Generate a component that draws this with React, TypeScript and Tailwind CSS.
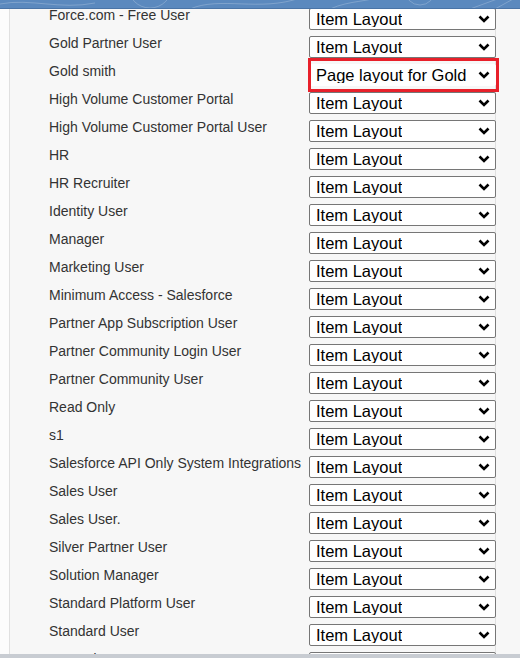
import React from "react";

const profiles = [
  "Force.com - Free User",
  "Gold Partner User",
  "Gold smith",
  "High Volume Customer Portal",
  "High Volume Customer Portal User",
  "HR",
  "HR Recruiter",
  "Identity User",
  "Manager",
  "Marketing User",
  "Minimum Access - Salesforce",
  "Partner App Subscription User",
  "Partner Community Login User",
  "Partner Community User",
  "Read Only",
  "s1",
  "Salesforce API Only System Integrations",
  "Sales User",
  "Sales User.",
  "Silver Partner User",
  "Solution Manager",
  "Standard Platform User",
  "Standard User",
  "Second User",
];

function Chevron() {
  return (
    <svg width="12" height="8" viewBox="0 0 12 8" className="shrink-0">
      <path d="M1.5 1.5 L6 6 L10.5 1.5" fill="none" stroke="#000" strokeWidth="2.6" />
    </svg>
  );
}

function LayoutSelect({ value, highlight }: { value: string; highlight?: boolean }) {
  return (
    <div className="relative -mr-px mt-[3px] w-[187px]">
      <div
        className={
          "flex h-[22px] items-center justify-between rounded-[2px] border bg-white pl-[6px] pr-[5px] text-[16.5px] leading-none text-black " +
          (highlight ? "border-white" : "border-[#767676]")
        }
      >
        <span className="overflow-hidden whitespace-nowrap">{value}</span>
        <Chevron />
      </div>
      {highlight && (
        <div className="pointer-events-none absolute -bottom-[3px] -left-[1px] -right-[3px] -top-[6px] border-[3px] border-[#e8202a]" />
      )}
    </div>
  );
}

function Header() {
  return (
    <div className="relative h-[9px] shrink-0 overflow-hidden border-b border-[#4a74a6] bg-[#5b89be]">
      <svg width="520" height="9" className="absolute inset-0" viewBox="0 0 520 9">
        <g fill="none" stroke="rgba(255,255,255,0.22)" strokeWidth="1">
          <path d="M0 4 C30 -2 60 10 95 3" />
          <circle cx="150" cy="-14" r="22" />
          <path d="M190 9 C220 -4 260 12 300 -2" />
          <path d="M330 9 C350 0 370 2 380 -4" />
          <circle cx="420" cy="-10" r="15" />
          <path d="M470 9 L500 -2" />
          <path d="M495 9 L515 -2" />
        </g>
      </svg>
    </div>
  );
}

export default function App() {
  return (
    <div
      className="flex h-[658px] w-[520px] flex-col overflow-hidden bg-[#f7f7f7]"
      style={{ fontFamily: '"Liberation Sans", Arial, sans-serif' }}
    >
      <Header />
      <div className="flex min-h-0 flex-1 overflow-hidden">
        <div className="w-[9px] shrink-0 bg-[#fcfcfc]" />
        <div className="w-[487px] shrink-0 border-x border-[#e0e0e0] bg-[#f7f7f7]">
          <div className="-mt-[4px] flex flex-col">
            {profiles.map((name, i) => (
              <div key={name} className="flex h-[28px] pl-[39px]">
                <div className="w-[260px] shrink-0 whitespace-nowrap text-[14px] leading-[20px] text-[#333]">
                  {name}
                </div>
                <LayoutSelect
                  value={i === 2 ? "Page layout for Gold" : "Item Layout"}
                  highlight={i === 2}
                />
              </div>
            ))}
          </div>
        </div>
        <div className="flex-1 bg-[#f7f7f7]" />
      </div>
      <div className="h-[4px] shrink-0 bg-[#c8ccd2]" />
    </div>
  );
}
